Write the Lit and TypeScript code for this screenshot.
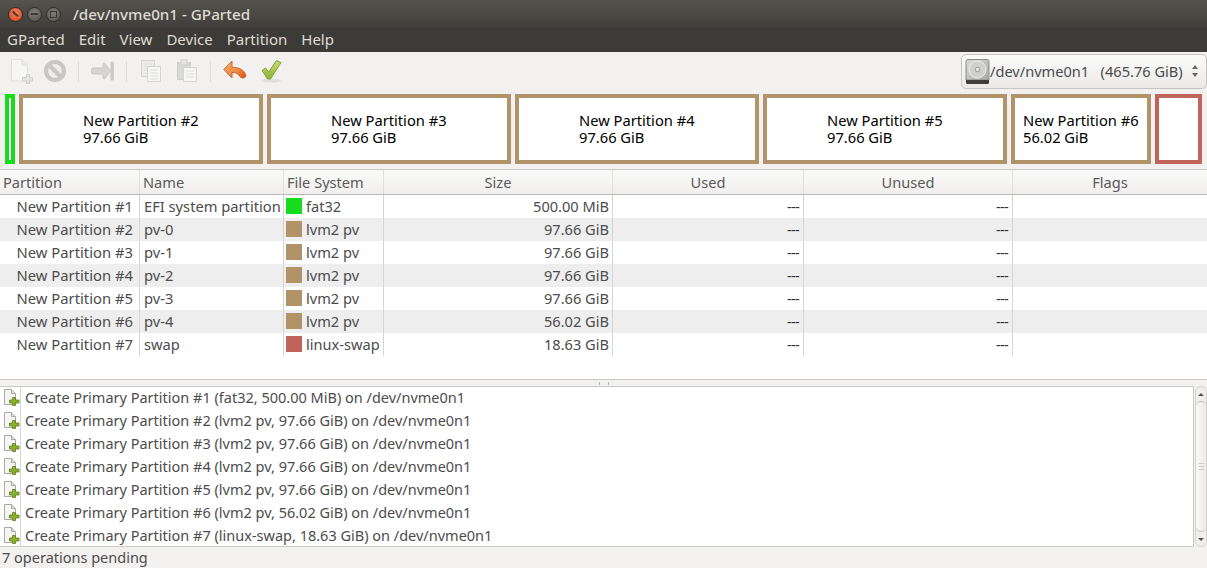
import { LitElement, css, html, svg } from "lit";
import { customElement } from "lit/decorators.js";

const GREEN = "#16dc1c";
const TAN = "#b1936a";
const RED = "#c0645c";

const segments = [
  { w: 10, color: GREEN },
  { w: 244, color: TAN, name: "New Partition #2", size: "97.66 GiB", pad: 60 },
  { w: 244, color: TAN, name: "New Partition #3", size: "97.66 GiB", pad: 60 },
  { w: 244, color: TAN, name: "New Partition #4", size: "97.66 GiB", pad: 60 },
  { w: 244, color: TAN, name: "New Partition #5", size: "97.66 GiB", pad: 60 },
  { w: 140, color: TAN, name: "New Partition #6", size: "56.02 GiB", pad: 8 },
  { w: 47, color: RED },
];

const rows = [
  ["New Partition #1", "EFI system partition", GREEN, "fat32", "500.00 MiB"],
  ["New Partition #2", "pv-0", TAN, "lvm2 pv", "97.66 GiB"],
  ["New Partition #3", "pv-1", TAN, "lvm2 pv", "97.66 GiB"],
  ["New Partition #4", "pv-2", TAN, "lvm2 pv", "97.66 GiB"],
  ["New Partition #5", "pv-3", TAN, "lvm2 pv", "97.66 GiB"],
  ["New Partition #6", "pv-4", TAN, "lvm2 pv", "56.02 GiB"],
  ["New Partition #7", "swap", RED, "linux-swap", "18.63 GiB"],
];

const ops = [
  "Create Primary Partition #1 (fat32, 500.00 MiB) on /dev/nvme0n1",
  "Create Primary Partition #2 (lvm2 pv, 97.66 GiB) on /dev/nvme0n1",
  "Create Primary Partition #3 (lvm2 pv, 97.66 GiB) on /dev/nvme0n1",
  "Create Primary Partition #4 (lvm2 pv, 97.66 GiB) on /dev/nvme0n1",
  "Create Primary Partition #5 (lvm2 pv, 97.66 GiB) on /dev/nvme0n1",
  "Create Primary Partition #6 (lvm2 pv, 56.02 GiB) on /dev/nvme0n1",
  "Create Primary Partition #7 (linux-swap, 18.63 GiB) on /dev/nvme0n1",
];

const newDoc = svg`<svg width="24" height="26" viewBox="0 0 24 26">
  <path d="M2.500 1.500h10.500l5.500 5.500v10h-1v2h-3v4h-12z" fill="#f6f6f5" stroke="#dfdfdd"/>
  <path d="M13 1.500v5.500h5.500" fill="#e8e8e6" stroke="#dfdfdd"/>
  <path d="M17.500 16.500h3v3h3v3.500h-3v2.500h-3v-2.500h-4v-3.500h4z" fill="#e4e4e2" stroke="#cdcdcb"/>
</svg>`;

const stopIcon = svg`<svg width="24" height="24" viewBox="0 0 24 24">
  <circle cx="12" cy="12" r="9" fill="#efeeed" stroke="#c8c7c5" stroke-width="4.200"/>
  <path d="M5.500 5.500l13 13" stroke="#c8c7c5" stroke-width="4.400"/>
</svg>`;

const applyAll = svg`<svg width="24" height="24" viewBox="0 0 24 24">
  <path d="M3 9h9V5l1.500-1 6 8-6 8-1.500-1v-4H3a3 3 0 0 1 0-6z" fill="#d6d5d3" stroke="#c8c7c5" stroke-linejoin="round"/>
  <rect x="19.500" y="2.500" width="3.500" height="19" rx="1.200" fill="#cbcac8"/>
</svg>`;

const copyIcon = svg`<svg width="22" height="24" viewBox="0 0 22 24">
  <path d="M1.500 1.500h13v16h-13z" fill="#ececea" stroke="#d4d4d2"/>
  <path d="M4 5h8M4 8h8M4 11h8" stroke="#dededc"/>
  <path d="M7.500 7.500h13v15h-13z" fill="#f6f6f5" stroke="#d4d4d2"/>
  <path d="M10 11h8M10 14h8M10 17h8M10 20h8" stroke="#dededc"/>
</svg>`;

const pasteIcon = svg`<svg width="22" height="24" viewBox="0 0 22 24">
  <path d="M1.500 3.500h13v17h-13z" fill="#d8d8d6" stroke="#cfcfcd"/>
  <rect x="5" y="1" width="6" height="5" fill="#e6e6e4" stroke="#cfcfcd"/>
  <path d="M7.500 8.500h13v14h-13z" fill="#f6f6f5" stroke="#d4d4d2"/>
  <path d="M10 12h8M10 15h8M10 18h8" stroke="#dededc"/>
</svg>`;

const undoIcon = svg`<svg width="24" height="22" viewBox="0 0 24 22">
  <defs><linearGradient id="undo" x1="0" y1="0" x2="1" y2="1">
    <stop offset="0" stop-color="#f6b070"/><stop offset=".6" stop-color="#ec8a44"/><stop offset="1" stop-color="#dc4a1c"/>
  </linearGradient></defs>
  <path d="M9 1L.8 9.500 9 18v-5.500c3.400-.2 5.800.8 7.300 3.200 1 1.600 2.600 2.800 4.700 2.200 2-.6 2.200-2.600 1.200-4.400-2.200-4-6.400-6-13.200-6.200z" fill="url(#undo)" stroke="#d4642a" stroke-linejoin="round"/>
</svg>`;

const checkIcon = svg`<svg width="22" height="24" viewBox="0 0 22 24">
  <defs><linearGradient id="chk" x1="0" y1="0" x2="0" y2="1">
    <stop offset="0" stop-color="#c8dc74"/><stop offset="1" stop-color="#8eb236"/>
  </linearGradient></defs>
  <ellipse cx="10" cy="21.500" rx="10" ry="2" fill="#dfdedc"/>
  <path d="M1 11.500l3.500-2.500 3 4L15.500 1.500 20 3.500 9.500 20H6.500z" fill="url(#chk)" stroke="#84a43a" stroke-linejoin="round"/>
</svg>`;

const diskIcon = svg`<svg width="25" height="27" viewBox="0 0 25 27">
  <defs><linearGradient id="disk" x1="0" y1="0" x2="1" y2="1">
    <stop offset="0" stop-color="#dcdcda"/><stop offset="1" stop-color="#a8a8a6"/>
  </linearGradient></defs>
  <path d="M3 1.500h19a2 2 0 0 1 2 2V22H1V3.500a2 2 0 0 1 2-2z" fill="url(#disk)" stroke="#8c8c8a"/>
  <circle cx="12.500" cy="11.500" r="8.500" fill="#cfcfcd" stroke="#eeeeec"/>
  <circle cx="12.500" cy="11.500" r="2.200" fill="#e8e8e6" stroke="#979795"/>
  <path d="M1 22h23v2.500a1.500 1.500 0 0 1-1.500 1.500h-20A1.500 1.500 0 0 1 1 24.500z" fill="#3f3f3d"/>
</svg>`;

const opIcon = svg`<svg width="16" height="17" viewBox="0 0 16 17">
  <path d="M.5.500h7l4 4v11h-11z" fill="#f5f5f4" stroke="#a9a9a7"/>
  <path d="M7.500.500v4h4" fill="#dcdcda" stroke="#a9a9a7"/>
  <path d="M8.500 8.500h3v2.500h3.500v3h-3.500v2.500h-3v-2.500h-3v-3h3z" fill="#8ab22c" stroke="#5e7f1c" stroke-width=".8"/>
</svg>`;

@customElement("app-root")
export class AppRoot extends LitElement {
  static styles = css`
    :host {
      display: flex;
      flex-direction: column;
      height: 568px;
      overflow: hidden;
      background: #f2f1f0;
      color: #3c3c3c;
      font-family: "Noto Sans", sans-serif;
      font-size: 14.6px;
    }

    .titlebar {
      display: flex;
      flex: none;
      align-items: center;
      height: 28px;
      padding-left: 8px;
      background: linear-gradient(#54534d, #3f3e3a);
      color: #dfdbd2;
    }
    .win-btn {
      width: 15px;
      height: 15px;
      margin-right: 4px;
      border-radius: 50%;
      border: 1px solid #2e2d2a;
      box-sizing: border-box;
      display: grid;
      place-items: center;
      background: radial-gradient(circle at 50% 35%, #7d7c76, #55544f);
    }
    .win-btn.close { background: radial-gradient(circle at 50% 35%, #f28058, #d9441c); }
    .glyph { display: block; background: #3a3935; width: 7px; }
    .glyph.x { height: 1.500px; transform: rotate(45deg); }
    .glyph.min { height: 2px; }
    .glyph.max { height: 7px; background: none; border: 1px solid #3a3935; box-sizing: border-box; }
    .title { margin-left: 8px; font-weight: 500; font-size: 15.2px; }

    .menubar {
      display: flex;
      flex: none;
      box-sizing: border-box;
      height: 24px;
      align-items: center;
      padding: 0 0 2px 7px;
      gap: 14px;
      background: #3c3b37;
      color: #dfdbd2;
      font-size: 15px;
    }

    .toolbar {
      display: flex;
      align-items: center;
      height: 38px;
      padding-left: 9px;
      flex: none;
    }
    .tool { display: flex; width: 24px; justify-content: center; }
    .sep { width: 1px; height: 21px; background: #dddcda; }
    .g10 { margin-left: 10px; }
    .g11 { margin-left: 11px; }
    .g12 { margin-left: 12px; }
    .g13 { margin-left: 13px; }
    .combo {
      margin-left: auto;
      width: 246px;
      height: 35px;
      box-sizing: border-box;
      display: flex;
      align-items: center;
      padding-left: 3px;
      border: 1px solid #c6c5c3;
      border-radius: 5px;
      background: linear-gradient(#fbfbfa, #ebeae9);
      white-space: pre;
      color: #4c4c4c;
    }
    .spin { margin-left: auto; margin-right: 8px; display: flex; flex-direction: column; gap: 4px; }
    .spin i {
      display: block;
      border-left: 3px solid transparent;
      border-right: 3px solid transparent;
    }
    .spin i.up { border-bottom: 4px solid #666; }
    .spin i.down { border-top: 4px solid #666; }

    .map {
      display: flex;
      gap: 0 4px;
      height: 70px;
      margin: 4px 0 5px 5px;
      flex: none;
    }
    .seg {
      box-sizing: border-box;
      border: 4px solid;
      background: #fff;
      display: flex;
      flex-direction: column;
      justify-content: center;
      font-size: 14.7px;
      line-height: 17px;
      color: #000;
      white-space: nowrap;
    }

    .table {
      flex: none;
      height: 211px;
      box-sizing: border-box;
      border-top: 1px solid #cbcac8;
      border-bottom: 1px solid #cbcac8;
      background: #fff;
      overflow: hidden;
    }
    .row {
      display: grid;
      grid-template-columns: 140px 144px 100px 229px 191px 209px 1fr;
      height: 23px;
      align-items: center;
    }
    .row.head {
      height: 24px;
      border-bottom: 1px solid #b9b8b6;
      background: linear-gradient(#fafafa, #f0efee);
    }
    .row.alt { background: #eeeeee; }
    .cell {
      height: 100%;
      display: flex;
      align-items: center;
      box-sizing: border-box;
      border-right: 1px solid #d6d5d3;
      padding: 0 3px 2px;
      white-space: nowrap;
      overflow: hidden;
      color: #4c4c4c;
    }
    .cell.noline { border-right: none; }
    .head .cell { color: #5a5a58; border-right-color: #e0dfdd; padding-bottom: 0; }
    .center { justify-content: center; }
    .end { justify-content: flex-end; }
    .dash { letter-spacing: -.7px; padding-right: 4px; color: #333; }
    .first { justify-content: flex-end; padding-right: 6px; font-size: 14.8px; }
    .name { font-size: 14.7px; padding-left: 4px; }
    .swatch { width: 16px; height: 16px; margin: 0 4px 0 -1px; flex: none; }

    .grip {
      flex: none;
      height: 6px;
      display: flex;
      justify-content: center;
      align-items: center;
    }
    .grip span { width: 8px; height: 2px; border-left: 1px dotted #b5b4b2; border-right: 1px dotted #b5b4b2; }

    .log {
      flex: none;
      display: flex;
      height: 161px;
      font-size: 14.5px;
    }
    .list {
      flex: 1;
      box-sizing: border-box;
      border: 1px solid #cbcac8;
      border-left: none;
      background: #fff;
      overflow: hidden;
    }
    .ops { margin-top: -1px; }
    .op {
      display: flex;
      height: 23px;
      align-items: center;
      white-space: nowrap;
      color: #4c4c4c;
    }
    .op-icon {
      width: 21px;
      height: 100%;
      box-sizing: border-box;
      border-right: 1px solid #d6d5d3;
      padding-left: 4px;
      display: flex;
      align-items: center;
      flex: none;
    }
    .op-text { padding: 0 0 2px 4px; }

    .scroll {
      width: 12px;
      margin-left: 1px;
      display: flex;
      flex-direction: column;
      align-items: center;
      box-sizing: border-box;
      border: 1px solid #d4d3d1;
      border-radius: 6px;
      background: #f0efee;
    }
    .arrow { height: 14px; display: grid; place-items: center; flex: none; }
    .arrow i { display: block; border-left: 3px solid transparent; border-right: 3px solid transparent; }
    .arrow .up { border-bottom: 3px solid #555; }
    .arrow .down { border-top: 3px solid #555; }
    .thumb {
      flex: 1;
      width: 100%;
      box-sizing: border-box;
      border-top: 1px solid #bdbcba;
      border-bottom: 1px solid #bdbcba;
      border-radius: 6px;
      background: linear-gradient(90deg, #f8f8f7, #ecebea);
      display: flex;
      flex-direction: column;
      justify-content: center;
      align-items: center;
      gap: 2px;
    }
    .thumb b { display: block; width: 5px; height: 1px; background: #c9c8c6; }

    .status {
      flex: 1;
      min-height: 0;
      display: flex;
      align-items: center;
      padding: 0 0 2px 2px;
      font-size: 14.5px;
      color: #4c4c4c;
    }
  `;

  render() {
    return html`
      <div class="titlebar">
        <div class="win-btn close"><span class="glyph x"></span></div>
        <div class="win-btn"><span class="glyph min"></span></div>
        <div class="win-btn"><span class="glyph max"></span></div>
        <span class="title">/dev/nvme0n1 - GParted</span>
      </div>
      <div class="menubar">
        ${["GParted", "Edit", "View", "Device", "Partition", "Help"].map((m) => html`<span>${m}</span>`)}
      </div>

      <div class="toolbar">
        <span class="tool">${newDoc}</span>
        <span class="tool g10">${stopIcon}</span>
        <span class="sep g11"></span>
        <span class="tool g12">${applyAll}</span>
        <span class="sep g11"></span>
        <span class="tool g12">${copyIcon}</span>
        <span class="tool g12">${pasteIcon}</span>
        <span class="sep g11"></span>
        <span class="tool g12">${undoIcon}</span>
        <span class="tool g13">${checkIcon}</span>
        <div class="combo">
          ${diskIcon}<span>/dev/nvme0n1   (465.76 GiB)</span>
          <span class="spin"><i class="up"></i><i class="down"></i></span>
        </div>
      </div>

      <div class="map">
        ${segments.map(
          (s) => html`<div
            class="seg"
            style="width:${s.w}px;border-color:${s.color};padding-left:${s.pad ?? 0}px"
          >
            ${s.name ? html`<span>${s.name}</span><span>${s.size}</span>` : ""}
          </div>`
        )}
      </div>

      <div class="table">
        <div class="row head">
          <div class="cell">Partition</div>
          <div class="cell">Name</div>
          <div class="cell">File System</div>
          <div class="cell center">Size</div>
          <div class="cell center">Used</div>
          <div class="cell center">Unused</div>
          <div class="cell center noline">Flags</div>
        </div>
        ${rows.map(
          (r, i) => html`<div class="row ${i % 2 ? "alt" : ""}">
            <div class="cell first">${r[0]}</div>
            <div class="cell name">${r[1]}</div>
            <div class="cell"><span class="swatch" style="background:${r[2]}"></span>${r[3]}</div>
            <div class="cell end">${r[4]}</div>
            <div class="cell end dash">---</div>
            <div class="cell end dash">---</div>
            <div class="cell noline"></div>
          </div>`
        )}
      </div>

      <div class="grip"><span></span></div>

      <div class="log">
        <div class="list">
          <div class="ops">
            ${ops.map(
              (o) => html`<div class="op">
                <span class="op-icon">${opIcon}</span>
                <span class="op-text">${o}</span>
              </div>`
            )}
          </div>
        </div>
        <div class="scroll">
          <div class="arrow"><i class="up"></i></div>
          <div class="thumb"><b></b><b></b><b></b></div>
          <div class="arrow"><i class="down"></i></div>
        </div>
      </div>

      <div class="status">7 operations pending</div>
    `;
  }
}
